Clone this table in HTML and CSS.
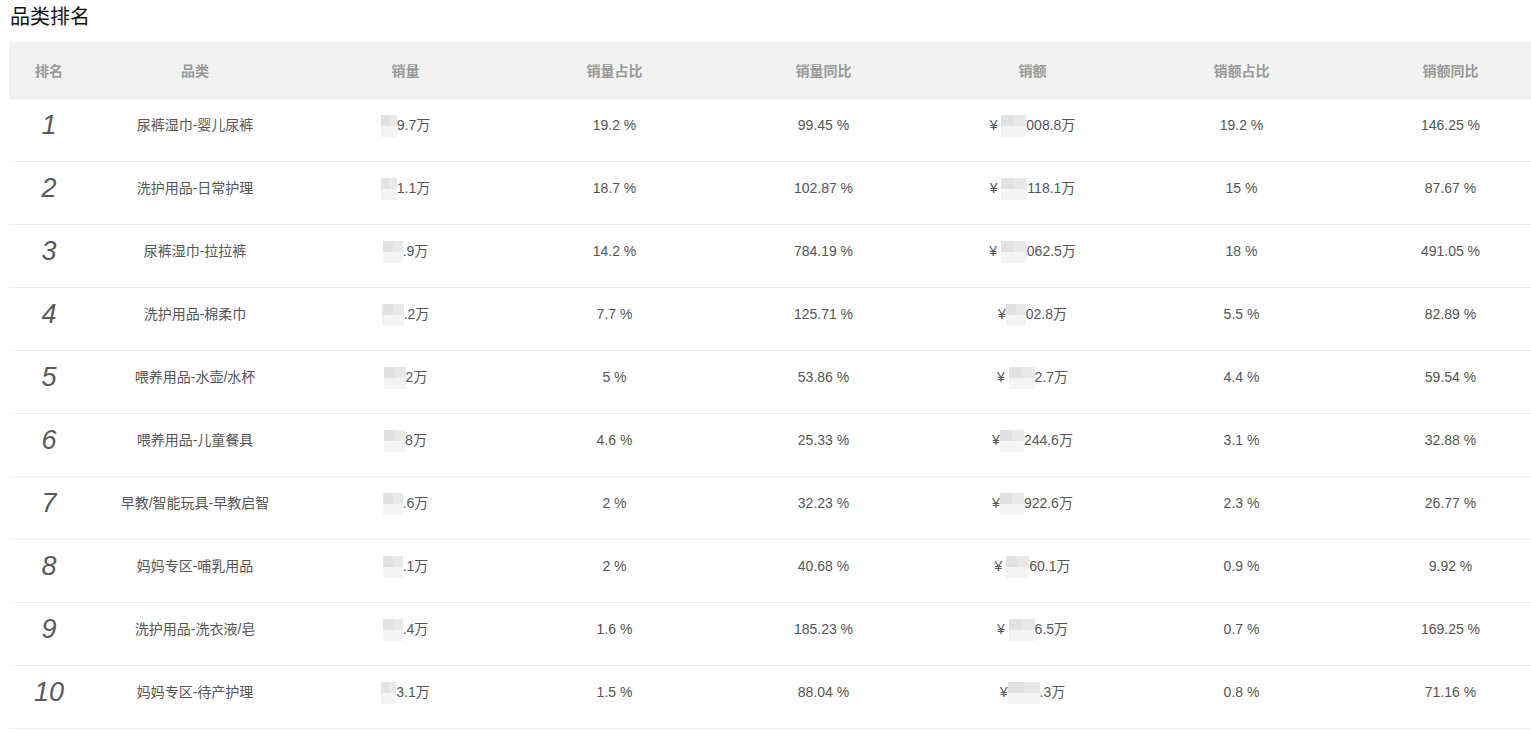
FILE: index.html
```html
<!DOCTYPE html>
<html lang="zh-CN">
<head>
<meta charset="utf-8">
<title>品类排名</title>
<link rel="stylesheet" href="styles.css">
</head>
<body>
<div class="page">
  <h2 class="title">品类排名</h2>
  <div class="table-wrap">
    <table class="rank-table">
      <colgroup>
        <col class="c-rank"><col class="c-cat"><col class="c-num"><col class="c-num"><col class="c-num"><col class="c-num"><col class="c-num"><col class="c-num">
      </colgroup>
      <thead>
        <tr><th>排名</th><th>品类</th><th>销量</th><th>销量占比</th><th>销量同比</th><th>销额</th><th>销额占比</th><th>销额同比</th></tr>
      </thead>
      <tbody>
        <tr><td class="rank">1</td><td>尿裤湿巾-婴儿尿裤</td><td><span class="mask" style="width:16px"></span>9.7万</td><td>19.2 %</td><td>99.45 %</td><td>¥ <span class="mask" style="width:25px"></span>008.8万</td><td>19.2 %</td><td>146.25 %</td></tr>
        <tr><td class="rank">2</td><td>洗护用品-日常护理</td><td><span class="mask" style="width:16px"></span>1.1万</td><td>18.7 %</td><td>102.87 %</td><td>¥ <span class="mask" style="width:26px"></span>118.1万</td><td>15 %</td><td>87.67 %</td></tr>
        <tr><td class="rank">3</td><td>尿裤湿巾-拉拉裤</td><td><span class="mask" style="width:20px"></span>.9万</td><td>14.2 %</td><td>784.19 %</td><td>¥ <span class="mask" style="width:26px"></span>062.5万</td><td>18 %</td><td>491.05 %</td></tr>
        <tr><td class="rank">4</td><td>洗护用品-棉柔巾</td><td><span class="mask" style="width:22px"></span>.2万</td><td>7.7 %</td><td>125.71 %</td><td>¥<span class="mask" style="width:20px"></span>02.8万</td><td>5.5 %</td><td>82.89 %</td></tr>
        <tr><td class="rank">5</td><td>喂养用品-水壶/水杯</td><td><span class="mask" style="width:22px"></span>2万</td><td>5 %</td><td>53.86 %</td><td>¥ <span class="mask" style="width:26px"></span>2.7万</td><td>4.4 %</td><td>59.54 %</td></tr>
        <tr><td class="rank">6</td><td>喂养用品-儿童餐具</td><td><span class="mask" style="width:21px"></span>8万</td><td>4.6 %</td><td>25.33 %</td><td>¥<span class="mask" style="width:24px"></span>244.6万</td><td>3.1 %</td><td>32.88 %</td></tr>
        <tr><td class="rank">7</td><td>早教/智能玩具-早教启智</td><td><span class="mask" style="width:20px"></span>.6万</td><td>2 %</td><td>32.23 %</td><td>¥<span class="mask" style="width:24px"></span>922.6万</td><td>2.3 %</td><td>26.77 %</td></tr>
        <tr><td class="rank">8</td><td>妈妈专区-哺乳用品</td><td><span class="mask" style="width:20px"></span>.1万</td><td>2 %</td><td>40.68 %</td><td>¥ <span class="mask" style="width:23px"></span>60.1万</td><td>0.9 %</td><td>9.92 %</td></tr>
        <tr><td class="rank">9</td><td>洗护用品-洗衣液/皂</td><td><span class="mask" style="width:20px"></span>.4万</td><td>1.6 %</td><td>185.23 %</td><td>¥ <span class="mask" style="width:26px"></span>6.5万</td><td>0.7 %</td><td>169.25 %</td></tr>
        <tr><td class="rank">10</td><td>妈妈专区-待产护理</td><td><span class="mask" style="width:15px"></span>3.1万</td><td>1.5 %</td><td>88.04 %</td><td>¥<span class="mask" style="width:32px"></span>.3万</td><td>0.8 %</td><td>71.16 %</td></tr>
      </tbody>
    </table>
  </div>
</div>
</body>
</html>
```
FILE: styles.css
```css
html, body {
  margin: 0;
  padding: 0;
  background: #ffffff;
}
.page {
  padding-left: 9px;
  font-family: "Liberation Sans", "Noto Sans CJK SC", sans-serif;
}
.title {
  margin: 0;
  padding-left: 1px;
  font-size: 20px;
  font-weight: normal;
  line-height: 34px;
  color: #111;
}
.table-wrap {
  margin-top: 8px;
  overflow: hidden;
}
.rank-table {
  table-layout: fixed;
  width: 1546px;
  border-collapse: collapse;
  border-spacing: 0;
}
.c-rank { width: 80px; }
.c-cat { width: 212px; }
.c-num { width: 209px; }
.rank-table th {
  height: 56px;
  padding: 0;
  background: #f2f2f2;
  color: #999;
  font-size: 14px;
  font-weight: bold;
  text-align: center;
  border-bottom: 1px solid #e8eaf0;
}
.rank-table td {
  padding: 11px 0 20px;
  height: 31px;
  line-height: 31px;
  text-align: center;
  font-size: 14px;
  color: #555;
  border-bottom: 1px solid #ebedf3;
  white-space: nowrap;
}
.rank-table td.rank {
  font-size: 27px;
  font-style: italic;
  color: #5a5a5a;
}
.mask {
  display: inline-block;
  height: 22px;
  vertical-align: -7px;
  background:
    linear-gradient(to bottom, rgba(0,0,0,0) 50%, #f4f4f4 50%),
    linear-gradient(to right, #e2e2e2 50%, #e8e8e8 50%);
}
```
